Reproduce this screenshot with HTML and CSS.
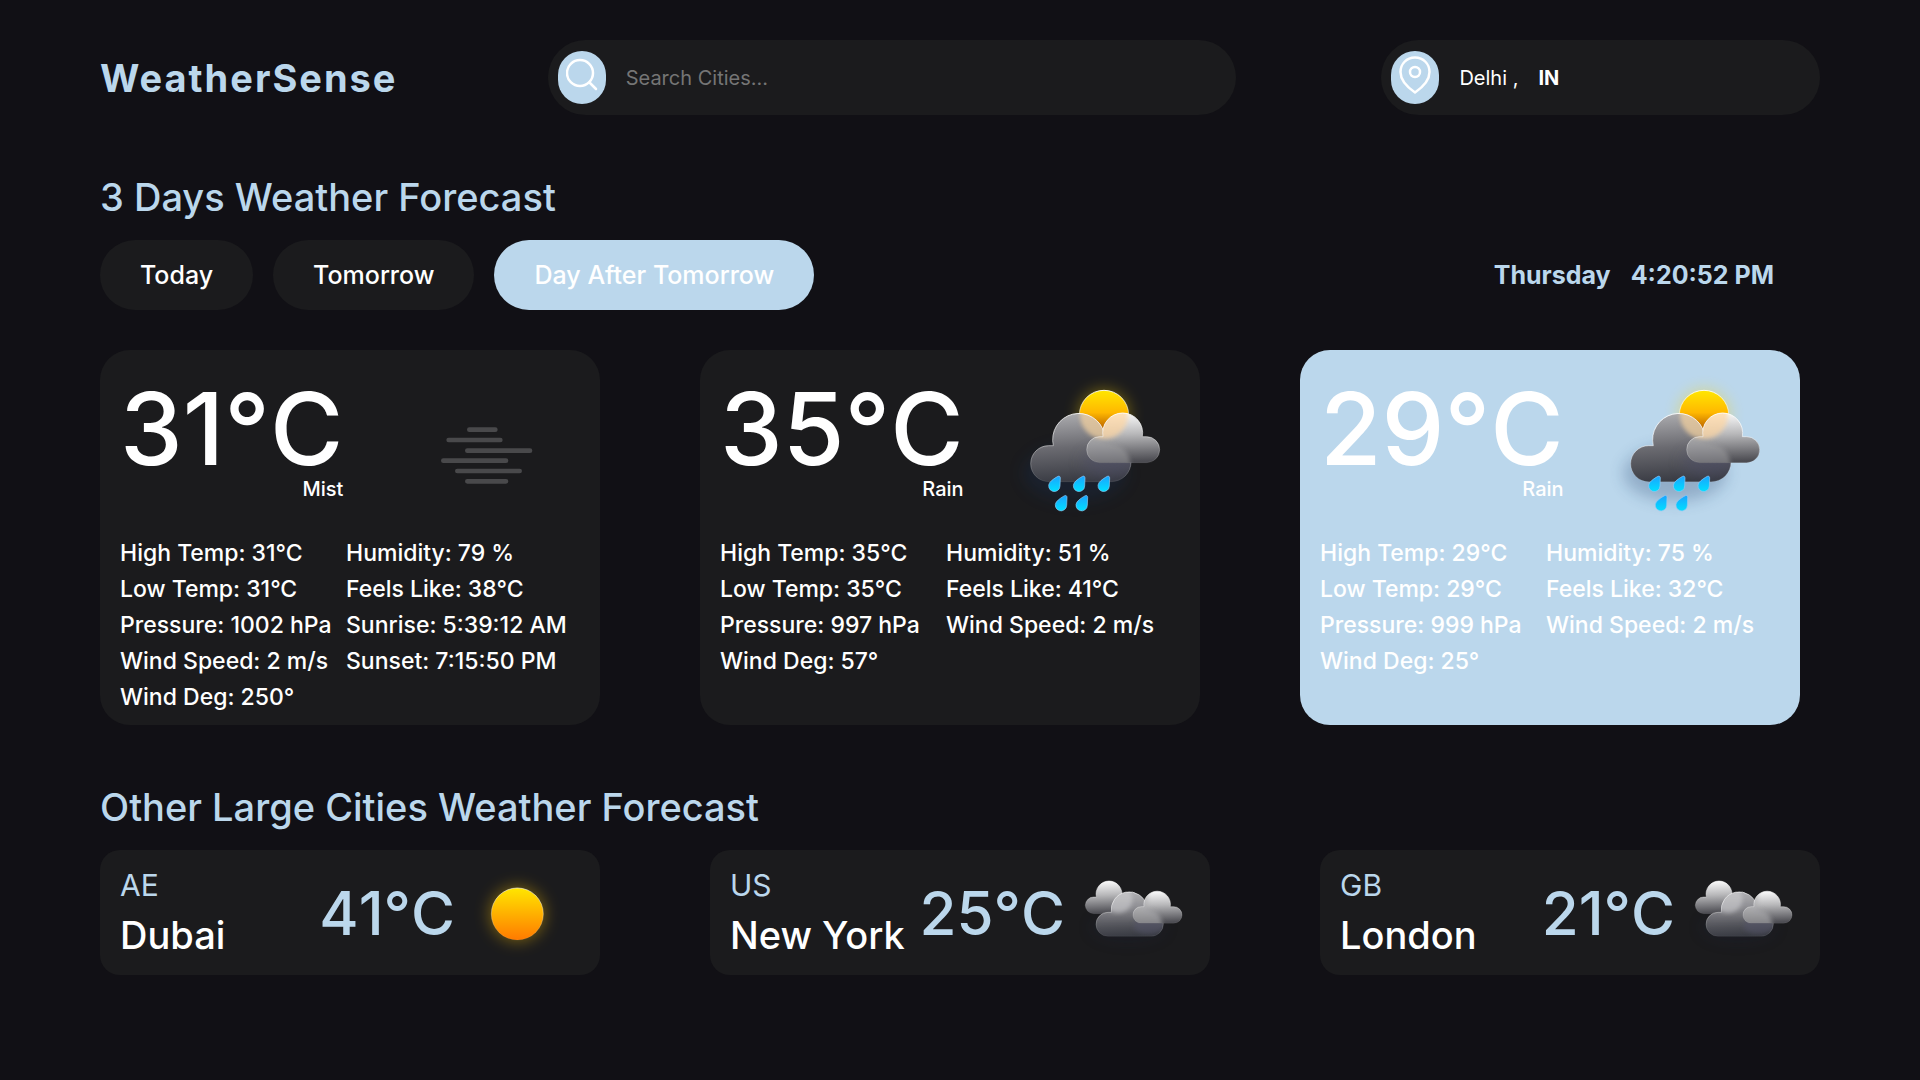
FILE: index.html
```html
<!DOCTYPE html>
<html lang="en">
<head>
<meta charset="utf-8">
<meta name="viewport" content="width=device-width, initial-scale=1">
<title>WeatherSense</title>
<link rel="stylesheet" href="styles.css">
</head>
<body>
<svg class="defs" aria-hidden="true">
  <defs>
    <linearGradient id="sunFill" x1="0" y1="0" x2="0" y2="1"><stop offset="0" stop-color="#ffe600"/><stop offset="1" stop-color="#ff7a00"/></linearGradient>
    <linearGradient id="sunDim" x1="0" y1="0" x2="0" y2="1"><stop offset="0" stop-color="#ffe600"/><stop offset=".45" stop-color="#ffb800"/><stop offset=".75" stop-color="#c06a00"/></linearGradient>
    <linearGradient id="darkCloud" x1="0.3" y1="0" x2="0.4" y2="1"><stop offset="0" stop-color="#acacaf"/><stop offset=".5" stop-color="#6a6a70"/><stop offset="1" stop-color="#393b43"/></linearGradient>
    <linearGradient id="lightCloud" x1="0" y1="0" x2="0.05" y2="1"><stop offset="0" stop-color="#ffffff"/><stop offset=".45" stop-color="#b8b8ba"/><stop offset="1" stop-color="#4c4c52"/></linearGradient>
    <linearGradient id="rim" x1="0" y1="0" x2="0" y2="1"><stop offset="0" stop-color="#fff" stop-opacity=".9"/><stop offset=".7" stop-color="#fff" stop-opacity=".3"/><stop offset="1" stop-color="#fff" stop-opacity=".08"/></linearGradient>
    <linearGradient id="drop" x1="0" y1="0" x2="0" y2="1"><stop offset="0" stop-color="#1ba3ff"/><stop offset="1" stop-color="#00e0ff"/></linearGradient>
    <filter id="blur6" x="-50%" y="-50%" width="200%" height="200%"><feGaussianBlur stdDeviation="6"/></filter>
    <filter id="blur22" x="-100%" y="-100%" width="300%" height="300%"><feGaussianBlur stdDeviation="22"/></filter>
    <path id="bigCloud" d="M116 335A54 54 0 0 1 116 227H130A78 78 0 0 1 283 191Q363 205 363 276A59 59 0 0 1 304 335Z"/>
    <path id="smallCloud" d="M269 278A39 39 0 0 1 269 200H279A60 60 0 1 1 397 200H410A39 39 0 0 1 410 278Z"/>
    <path id="raindrop" d="M13 1C17 -1 20 2 20 6L19 30A17 17 0 1 1 -12 20C-6 12 7 4 13 1Z"/>
    <clipPath id="bigClip"><use href="#bigCloud"/></clipPath>
    <clipPath id="smallClip"><use href="#smallCloud"/></clipPath>
    <symbol id="rain" viewBox="0 0 510 480">
      <circle cx="282" cy="135" r="76" fill="#ffd400" opacity=".4" filter="url(#blur22)"/>
      <ellipse cx="195" cy="310" rx="155" ry="85" fill="#17335e" opacity=".25" filter="url(#blur22)"/>
      <circle cx="282" cy="135" r="74" fill="url(#sunDim)" stroke="url(#rim)" stroke-width="3"/>
      <use href="#bigCloud" fill="url(#darkCloud)"/>
      <g clip-path="url(#bigClip)">
        <circle cx="282" cy="135" r="72" fill="#f0cf9f" opacity=".75" filter="url(#blur6)"/>
        <ellipse cx="300" cy="280" rx="80" ry="40" fill="#50506a" opacity=".5" filter="url(#blur22)"/>
      </g>
      <use href="#bigCloud" fill="none" stroke="url(#rim)" stroke-width="3"/>
      <use href="#smallCloud" fill="url(#lightCloud)"/>
      <g clip-path="url(#smallClip)">
        <circle cx="282" cy="135" r="72" fill="#ffd6a0" opacity=".7" filter="url(#blur6)"/>
        <path d="M200 290V190Q290 215 320 225Q363 240 363 300Z" fill="#a0a0a3" opacity=".5" filter="url(#blur6)"/>
      </g>
      <use href="#smallCloud" fill="none" stroke="url(#rim)" stroke-width="3"/>
      <g fill="url(#drop)" stroke="#8fc9f5" stroke-width="2">
        <use href="#raindrop" x="131" y="318"/><use href="#raindrop" x="205" y="318"/><use href="#raindrop" x="279" y="318"/>
        <use href="#raindrop" x="151" y="376"/><use href="#raindrop" x="213" y="376"/>
      </g>
    </symbol>
    <symbol id="mist" viewBox="0 0 510 480">
      <path d="M178 179H256M116 210H271M172 242H360M100 272H288M142 303H329M172 334H288" stroke="#49494b" stroke-width="14" stroke-linecap="round"/>
    </symbol>
    <path id="backCloud" d="M71 159A25 25 0 0 1 71 109H79A39 39 0 1 1 155 109V159Z"/>
    <path id="midCloud" d="M114 227A36 36 0 0 1 114 155H124A54 54 0 0 1 230 135Q280 145 280 190A37 37 0 0 1 243 227Z"/>
    <path id="frontCloud" d="M214 188A25 25 0 0 1 214 138H222A40 40 0 1 1 301 138H311A25 25 0 0 1 311 188Z"/>
    <clipPath id="midClip"><use href="#midCloud"/></clipPath>
    <clipPath id="frontClip"><use href="#frontCloud"/></clipPath>
    <symbol id="clouds" viewBox="0 7 360 300">
      <ellipse cx="175" cy="200" rx="110" ry="40" fill="#1a2440" opacity=".25" filter="url(#blur22)"/>
      <use href="#backCloud" fill="url(#lightCloud)" stroke="url(#rim)" stroke-width="2"/>
      <use href="#midCloud" fill="url(#darkCloud)"/>
      <g clip-path="url(#midClip)"><rect x="60" y="80" width="240" height="80" fill="#c4c4c8" opacity=".3" filter="url(#blur22)"/><circle cx="145" cy="115" r="42" fill="#d8d8da" opacity=".5" filter="url(#blur6)"/><ellipse cx="235" cy="195" rx="45" ry="25" fill="#55556a" opacity=".5" filter="url(#blur6)"/></g>
      <use href="#midCloud" fill="none" stroke="url(#rim)" stroke-width="2"/>
      <use href="#frontCloud" fill="url(#lightCloud)"/>
      <g clip-path="url(#frontClip)"><path d="M180 200V80H232V145Q275 150 278 200Z" fill="#adadb0" opacity=".6" filter="url(#blur6)"/></g>
      <use href="#frontCloud" fill="none" stroke="url(#rim)" stroke-width="2"/>
    </symbol>
    <symbol id="sun" viewBox="0 7 360 300">
      <circle cx="172" cy="160" r="84" fill="#ffc400" opacity=".38" filter="url(#blur22)"/>
      <circle cx="172" cy="160" r="78" fill="url(#sunFill)" stroke="url(#rim)" stroke-width="2"/>
    </symbol>
  </defs>
</svg>

<header class="header">
  <h1 class="logo">WeatherSense</h1>
  <form class="pill search">
    <button class="badge" type="button" aria-label="Search">
      <svg viewBox="0 0 32 38"><circle cx="14" cy="17" r="13"/><path d="M23.500 26.500L30 33"/></svg>
    </button>
    <input class="search-input" type="text" placeholder="Search Cities..." aria-label="Search Cities">
  </form>
  <div class="pill place">
    <span class="badge">
      <svg viewBox="0 0 32 38"><path d="M16 1.500C7.500 1.500 1.500 8 1.500 16C1.500 24 8 31 16 36.500C24 31 30.500 24 30.500 16C30.500 8 24.500 1.500 16 1.500Z"/><circle cx="16" cy="16" r="5"/></svg>
    </span>
    <span>Delhi ,</span><strong>IN</strong>
  </div>
</header>

<main>
  <section class="section">
    <h2 class="title">3 Days Weather Forecast</h2>
    <div class="toolbar">
      <button class="tab" type="button">Today</button>
      <button class="tab" type="button">Tomorrow</button>
      <button class="tab active" type="button">Day After Tomorrow</button>
      <p class="clock"><span>Thursday</span><time>4:20:52 PM</time></p>
    </div>
    <div class="days">
      <article class="day">
        <div class="day-top">
          <div class="reading"><p class="temp">31°C</p><p class="sky">Mist</p></div>
          <svg class="day-icon"><use href="#mist"/></svg>
        </div>
        <div class="details">
          <ul><li>High Temp: 31°C</li><li>Low Temp: 31°C</li><li>Pressure: 1002 hPa</li><li>Wind Speed: 2 m/s</li><li>Wind Deg: 250°</li></ul>
          <ul><li>Humidity: 79 %</li><li>Feels Like: 38°C</li><li>Sunrise: 5:39:12 AM</li><li>Sunset: 7:15:50 PM</li></ul>
        </div>
      </article>
      <article class="day">
        <div class="day-top">
          <div class="reading"><p class="temp">35°C</p><p class="sky">Rain</p></div>
          <svg class="day-icon"><use href="#rain"/></svg>
        </div>
        <div class="details">
          <ul><li>High Temp: 35°C</li><li>Low Temp: 35°C</li><li>Pressure: 997 hPa</li><li>Wind Deg: 57°</li></ul>
          <ul><li>Humidity: 51 %</li><li>Feels Like: 41°C</li><li>Wind Speed: 2 m/s</li></ul>
        </div>
      </article>
      <article class="day active">
        <div class="day-top">
          <div class="reading"><p class="temp">29°C</p><p class="sky">Rain</p></div>
          <svg class="day-icon"><use href="#rain"/></svg>
        </div>
        <div class="details">
          <ul><li>High Temp: 29°C</li><li>Low Temp: 29°C</li><li>Pressure: 999 hPa</li><li>Wind Deg: 25°</li></ul>
          <ul><li>Humidity: 75 %</li><li>Feels Like: 32°C</li><li>Wind Speed: 2 m/s</li></ul>
        </div>
      </article>
    </div>
  </section>

  <section class="section">
    <h2 class="title">Other Large Cities Weather Forecast</h2>
    <div class="cities">
      <article class="city">
        <div class="names"><p class="country">AE</p><h3 class="name">Dubai</h3></div>
        <p class="city-temp">41°C</p>
        <svg class="city-icon"><use href="#sun"/></svg>
      </article>
      <article class="city">
        <div class="names"><p class="country">US</p><h3 class="name">New York</h3></div>
        <p class="city-temp">25°C</p>
        <svg class="city-icon"><use href="#clouds"/></svg>
      </article>
      <article class="city">
        <div class="names"><p class="country">GB</p><h3 class="name">London</h3></div>
        <p class="city-temp">21°C</p>
        <svg class="city-icon"><use href="#clouds"/></svg>
      </article>
    </div>
  </section>
</main>
</body>
</html>
```

FILE: styles.css
```css
:root {
  --bg: #111015;
  --card: #1b1b1d;
  --accent: #bbd7ec;
}

* {
  box-sizing: border-box;
  margin: 0;
  padding: 0;
}

body {
  min-height: 100vh;
  padding: 40px 100px;
  background: var(--bg);
  color: #fff;
  font-family: "Inter", "Liberation Sans", sans-serif;
  font-size: 20px;
}

button,
input {
  border: 0;
  color: inherit;
  font: inherit;
}

ul {
  list-style: none;
}

.defs {
  position: absolute;
  width: 0;
  height: 0;
}

.header {
  display: flex;
  justify-content: space-between;
  align-items: center;
}

.logo {
  min-width: 302px;
  color: var(--accent);
  font-size: 38px;
  font-weight: 700;
  letter-spacing: 2px;
}

.pill {
  display: flex;
  align-items: center;
  gap: 20px;
  height: 75px;
  padding: 0 10px;
  border-radius: 40px;
  background: var(--card);
}

.search {
  width: 40%;
}

.place {
  width: 25.5%;
}

.badge {
  display: flex;
  justify-content: center;
  flex: none;
  width: 48px;
  height: 53px;
  padding-top: 5px;
  border-radius: 24px;
  background: var(--accent);
}

.badge svg {
  width: 32px;
  height: 38px;
  fill: none;
  stroke: #fff;
  stroke-width: 2.5;
  stroke-linecap: round;
  stroke-linejoin: round;
}

.search-input {
  flex: 1;
  min-width: 0;
  background: none;
  outline: none;
}

.search-input::placeholder {
  color: #757575;
}

.section {
  margin-top: 59px;
}

.title {
  margin-bottom: 20px;
  color: var(--accent);
  font-size: 38px;
  font-weight: 500;
  line-height: 46px;
}

.toolbar {
  display: flex;
  align-items: center;
  gap: 20px;
  padding-right: 46px;
  font-size: 25px;
}

.tab {
  height: 70px;
  padding: 0 40px;
  border-radius: 35px;
  background: var(--card);
  font-weight: 500;
}

.active {
  background: var(--accent);
}

.clock {
  display: flex;
  gap: 20px;
  margin-left: auto;
  color: var(--accent);
  font-weight: 700;
}

.days {
  display: grid;
  grid-template-columns: repeat(3, 1fr);
  gap: 100px;
  margin-top: 40px;
  padding-right: 20px;
}

.day {
  padding: 20px 20px 10px;
  border-radius: 30px;
  background: var(--card);
  font-weight: 500;
}

.day.active {
  background: var(--accent);
}

.day-top {
  display: flex;
  justify-content: space-between;
  margin-bottom: 5px;
}

.reading {
  padding-top: 9px;
  text-align: right;
}

.temp {
  font-size: 100px;
  line-height: 100px;
  font-kerning: none;
}

.sky {
  line-height: 20px;
}

.day-icon {
  width: 170px;
  height: 160px;
  overflow: visible;
}

.details {
  display: grid;
  grid-template-columns: 226px 1fr;
  font-size: 23px;
  line-height: 36px;
  white-space: nowrap;
}

.cities {
  display: grid;
  grid-template-columns: repeat(3, 1fr);
  gap: 110px;
}

.city {
  display: flex;
  align-items: center;
  gap: 5px;
  height: 125px;
  padding: 0 20px;
  border-radius: 20px;
  background: var(--card);
}

.names {
  display: grid;
  gap: 9px;
  margin-right: auto;
}

.country {
  color: var(--accent);
  font-size: 30px;
  line-height: 36px;
}

.name {
  font-size: 38px;
  font-weight: 500;
  line-height: 46px;
}

.city-temp {
  color: var(--accent);
  font-size: 60px;
  font-weight: 500;
  font-kerning: none;
}

.city-icon {
  width: 120px;
  height: 100px;
}
```
